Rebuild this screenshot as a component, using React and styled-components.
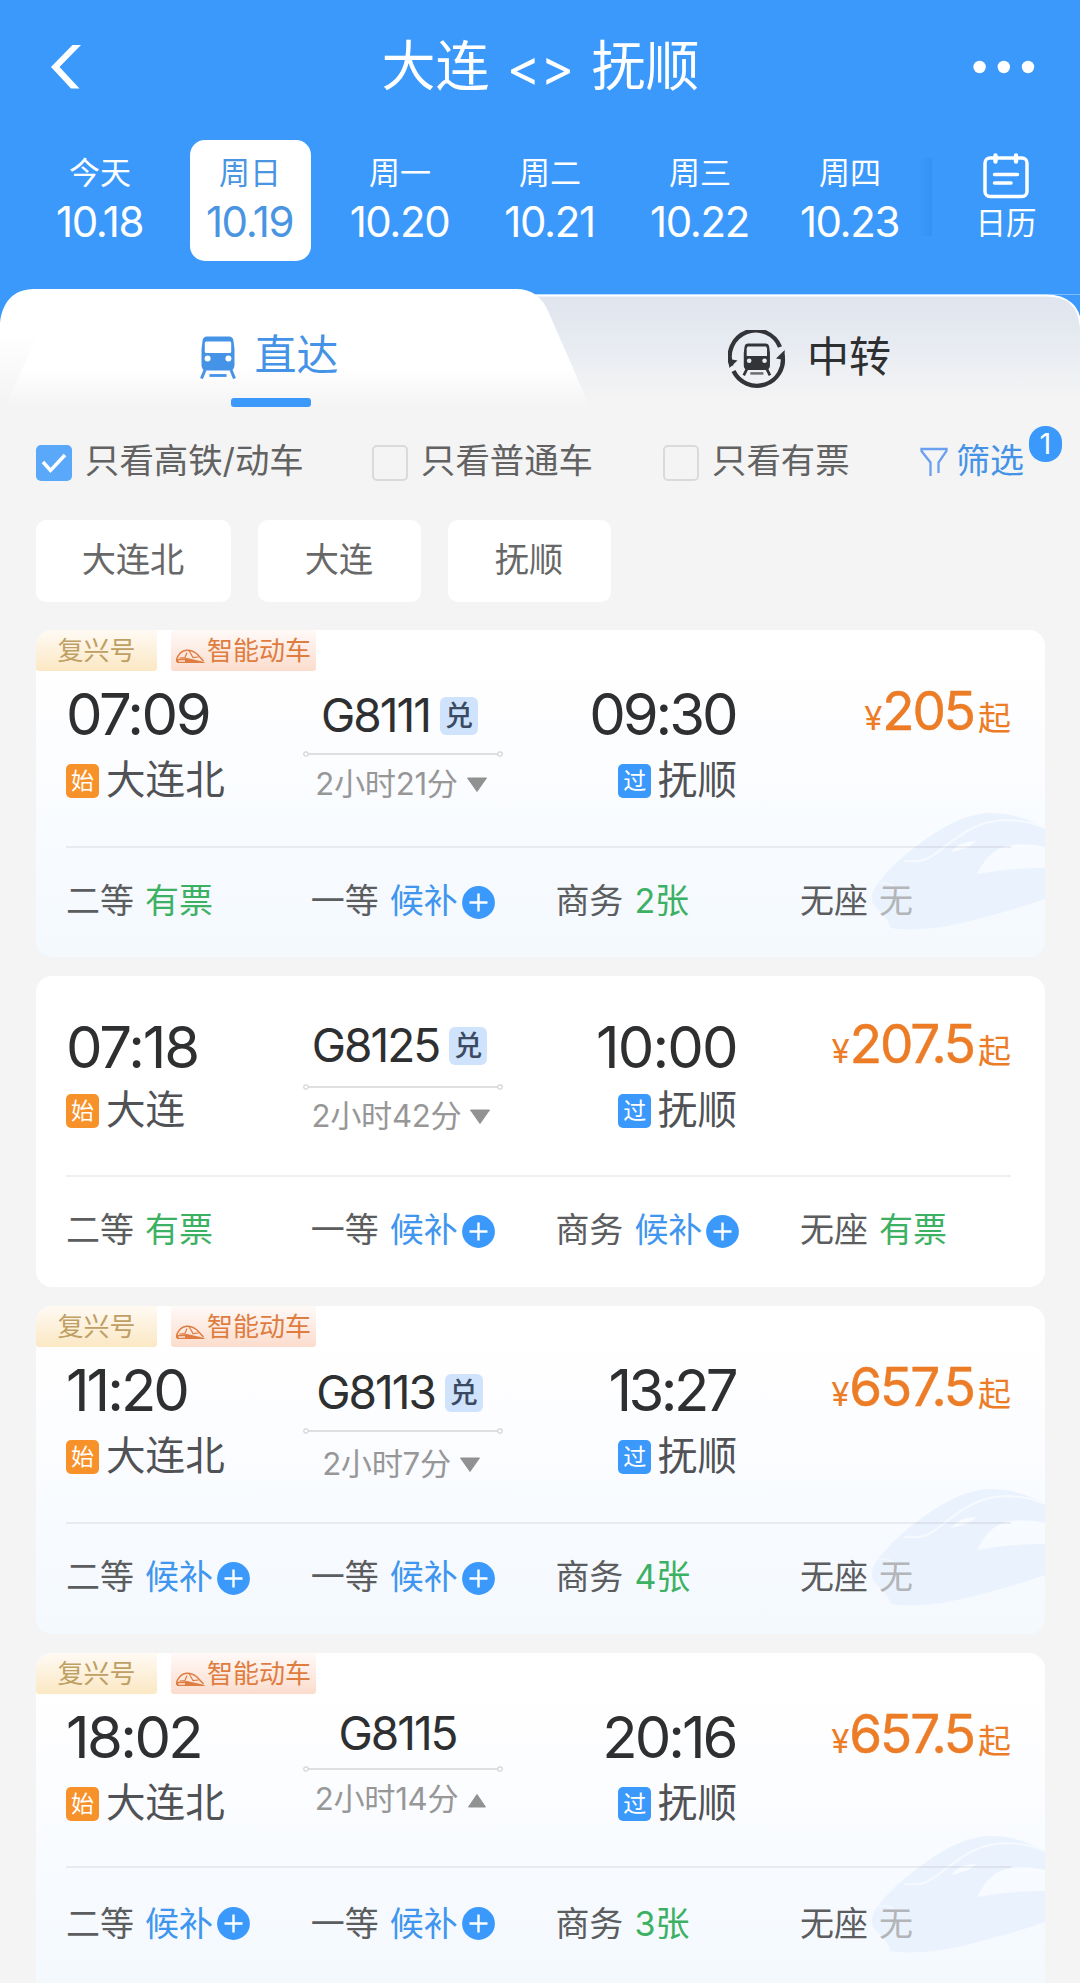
import React from "react";
import styled, { createGlobalStyle, css } from "styled-components";

const BLUE = "#3b99fc";

const GlobalStyle = createGlobalStyle`
  *, *::before, *::after { box-sizing: border-box; }
  body {
    margin: 0;
    background: #f4f4f4;
    font-family: Inter, "Noto Sans CJK SC", sans-serif;
    font-weight: 400;
    color: #333;
  }
`;

const Screen = styled.div`
  width: 1080px;
  height: 1983px;
  overflow: hidden;
  background: #f4f4f4;
`;

/* ---------- header ---------- */

const Header = styled.header`
  height: 289px;
  background: ${BLUE};
  color: #fff;
`;

const TitleBar = styled.div`
  height: 134px;
  padding: 0 45px 0 51px;
  display: grid;
  grid-template-columns: 120px 1fr 120px;
  align-items: center;
`;

const Title = styled.h1`
  margin: 0;
  padding: 1px 5px 0 0;
  font-size: 54px;
  line-height: 60px;
  font-weight: 400;
  text-align: center;
  white-space: pre;
  word-spacing: 2px;
`;

const Arrows = styled.span`
  font-size: 51px;
  letter-spacing: 0;
`;

const MoreIcon = styled.svg`
  justify-self: end;
`;

const DateBar = styled.div`
  display: flex;
  padding: 6px 0 0 25px;
`;

const DateCell = styled.div`
  width: 150px;
  height: 121px;
  display: flex;
  justify-content: center;
`;

const DateBox = styled.div`
  width: 121px;
  height: 121px;
  border-radius: 15px;
  display: flex;
  flex-direction: column;
  align-items: center;
  padding-top: 13px;
  ${(p) =>
    p.$active &&
    css`
      background: #fff;
      color: #4a95e2;
    `}
`;

const Weekday = styled.span`
  font-size: 31px;
  line-height: 40px;
`;

const DayNumber = styled.span`
  margin-top: 9px;
  padding-right: 1px;
  font-size: 42px;
  line-height: 40px;
  letter-spacing: -1.4px;
`;

const CalendarButton = styled.div`
  flex: 1;
  display: flex;
  flex-direction: column;
  align-items: center;
  padding: 13px 0 0 0;
  font-size: 30.5px;
  line-height: 36px;
  gap: 6px;
`;

const EdgeShade = styled.div`
  width: 13px;
  height: 78px;
  margin: 18px 0 0 -6px;
  background: linear-gradient(90deg, rgba(40, 120, 220, 0), rgba(40, 120, 220, 0.25));
`;

/* ---------- tabs ---------- */

const Tabs = styled.nav`
  position: relative;
  height: 118px;
  display: grid;
  grid-template-columns: 542px 538px;
`;

const TabsShape = styled.svg`
  position: absolute;
  inset: 0;
  z-index: 0;
`;

const Tab = styled.div`
  z-index: 1;
  display: flex;
  flex-direction: column;
  align-items: center;
  padding-top: ${(p) => p.$top}px;
  color: ${(p) => (p.$active ? "#4593e6" : "#2e2f31")};
  font-size: 42px;
  line-height: 60px;
`;

const TabLabel = styled.div`
  display: flex;
  align-items: center;
  gap: ${(p) => p.$gap}px;
  padding-right: 3px;

  svg {
    margin-top: ${(p) => p.$iconTop}px;
  }
`;

const TabMark = styled.i`
  width: 80px;
  height: 8.5px;
  margin-top: 13px;
  border-radius: 3px;
  background: ${BLUE};
`;

/* ---------- filters ---------- */

const FilterRow = styled.div`
  height: 113px;
  padding: 33px 18px 0 36px;
  display: flex;
  align-items: flex-start;
  font-size: 34.4px;
  line-height: 42px;
  color: #626262;
`;

const CheckLabel = styled.div`
  display: flex;
  width: ${(p) => p.$width}px;
  gap: 13px;
  white-space: nowrap;
`;

const Box = styled.span`
  width: 36px;
  height: 36px;
  margin-top: 5px;
  border-radius: 5px;
  flex: none;
  display: grid;
  place-items: center;
  border: ${(p) => (p.$on ? "0" : "2.5px solid #dadada")};
  background: ${(p) => (p.$on ? "#5aa8fa" : "transparent")};
`;

const FilterButton = styled.div`
  display: flex;
  color: #4593e6;
  margin-left: auto;
  font-size: 34px;
`;

const FunnelIcon = styled.svg`
  margin: 7px 8px 0 0;
`;

const CountBadge = styled.span`
  width: 33px;
  height: 36px;
  margin: -14px 0 0 5px;
  border-radius: 16px;
  background: ${BLUE};
  color: #fff;
  font-size: 29px;
  line-height: 35px;
  text-align: center;
`;

const StationRow = styled.div`
  display: flex;
  gap: 27px;
  padding: 0 36px;
  height: 110px;
`;

const StationChip = styled.div`
  width: ${(p) => p.$width}px;
  height: 82px;
  padding-right: 1px;
  border-radius: 10px;
  background: #fff;
  color: #686868;
  font-size: 34.2px;
  line-height: 79px;
  text-align: center;
`;

/* ---------- train cards ---------- */

const TrainList = styled.main`
  display: flex;
  flex-direction: column;
  gap: 19px;
  padding: 0 35px 0 36px;
`;

const Card = styled.article`
  position: relative;
  overflow: hidden;
  border-radius: 16px;
  flex: none;
  height: ${(p) => p.$height}px;
  background: ${(p) =>
    p.$smart ? "linear-gradient(180deg, #fff 0, #fefeff 72px, #f8fbff 203px, #f4f9fe 327px)" : "#fff"};
`;

const TrainShape = styled.svg`
  position: absolute;
  right: 0;
  top: 178px;
`;

const Tags = styled.div`
  display: flex;
  gap: 14px;
  height: 41px;
`;

const Tag = styled.span`
  width: ${(p) => p.$width}px;
  height: 41px;
  display: flex;
  justify-content: center;
  font-size: 26px;
  line-height: 41px;
  white-space: nowrap;
  color: ${(p) => (p.$smart ? "#df7c40" : "#bf9f63")};
  border-radius: 0 0 3px 3px;
  background: ${(p) =>
    p.$smart
      ? "linear-gradient(180deg, #fffaf8, #fbdccd)"
      : "linear-gradient(180deg, #fffaf4, #fbe8c4)"};
`;

const TagIcon = styled.svg`
  margin: 19px 2px 0 0;
`;

const Journey = styled.section`
  position: relative;
  display: grid;
  grid-template-columns: 237px 200px 233px 1fr;
  margin: 0 34px 0 30px;
  height: ${(p) => (p.$open ? 172 : p.$smart ? 175 : 199)}px;
  padding-top: ${(p) => (p.$smart ? 13 : 41)}px;
`;

const Stop = styled.div`
  display: flex;
  flex-direction: column;
  align-items: ${(p) => (p.$end ? "flex-end" : "flex-start")};
`;

const Time = styled.div`
  font-size: 58px;
  line-height: 60px;
  letter-spacing: ${(p) => p.$tracking}px;
  padding-right: ${(p) => -p.$tracking - 1.5}px;
  margin-right: -1px;
  color: #2e2f31;
`;

const StationName = styled.div`
  display: flex;
  align-items: flex-start;
  gap: ${(p) => (p.$end ? 6.5 : 7)}px;
  margin-top: ${(p) => (p.$smart ? 16 : 12.5)}px;
  margin-right: -1px;
  font-size: 39.6px;
  line-height: 40px;
  color: #505255;
`;

const StopBadge = styled.span`
  width: 33px;
  height: 34px;
  margin-top: 4px;
  border-radius: 5px;
  background: ${(p) => (p.$pass ? BLUE : "#f7922a")};
  color: #fff;
  font-size: 23px;
  line-height: 34px;
  text-align: center;
`;

const Middle = styled.div`
  display: flex;
  flex-direction: column;
  align-items: center;
`;

const TrainNo = styled.div`
  display: flex;
  align-items: center;
  gap: 10px;
  margin-top: ${(p) => p.$top}px;
  padding-right: ${(p) => (p.$plain ? 11 : 7)}px;
  height: 50px;
  font-size: 46px;
  line-height: 50px;
  letter-spacing: -2px;
  color: #2e2f31;
`;

const PointsBadge = styled.span`
  width: 38px;
  height: 38px;
  margin-top: 2px;
  border-radius: 6px;
  background: #cfe3fc;
  font-size: 28px;
  line-height: 38px;
  font-weight: 500;
  letter-spacing: 0;
  text-align: center;
  color: #3a4a62;
`;

const Track = styled.svg`
  flex: none;
  margin-top: ${(p) => p.$top}px;
`;

const Duration = styled.div`
  display: flex;
  align-items: center;
  gap: 8px;
  margin-top: ${(p) => p.$top}px;
  padding-right: 3px;
  font-size: 31.2px;
  line-height: 36px;
  letter-spacing: -0.3px;
  color: #979797;
`;

const Price = styled.div`
  text-align: right;
  margin-top: -3px;
  line-height: 60px;
  color: #ec7c26;
  font-size: 33px;
  white-space: nowrap;
`;

const Amount = styled.span`
  font-size: 53px;
  -webkit-text-stroke: 0.5px #ec7c26;
  letter-spacing: -2.1px;
  margin: 0 4px 0 0;
`;

const Seats = styled.section`
  position: relative;
  display: grid;
  grid-template-columns: repeat(4, 244.7px);
  margin: 0 34px 0 30px;
  padding-top: ${(p) => (p.$open ? 35 : 32)}px;
  border-top: 2px solid rgba(120, 125, 130, 0.12);
  font-size: 34px;
  line-height: 42px;
  color: #5c5d5f;
`;

const Seat = styled.div`
  display: flex;
  gap: 11px;
  white-space: nowrap;
`;

const seatColors = { yes: "#3cb163", wait: "#4096ee", none: "#b3b5b8" };

const SeatState = styled.span`
  display: flex;
  align-items: flex-start;
  color: ${(p) => seatColors[p.$kind]};
`;

const PlusIcon = styled.svg`
  margin: ${(p) => p.$top}px 0 0 4px;
`;

/* ---------- drawings ---------- */

const TrainGlyph = ({ width, height, color, hole }) => (
  <svg width={width} height={height} viewBox="0 0 36 43">
    <path d="M7 0.500H29Q33 0.500 33.500 5L34.500 13V29Q34.500 34.500 29.500 34.500H6.500Q1.500 34.500 1.500 29V13L2.500 5Q3 0.500 7 0.500Z" fill={color} />
    <path d="M6 5.500H30Q31 5.500 31.200 7V15.500Q31 17 30 17H6Q5 17 4.800 15.500V7Q5 5.500 6 5.500Z" fill={hole} />
    <circle cx="7.600" cy="22.500" r="3" fill={hole} />
    <circle cx="28.400" cy="22.500" r="3" fill={hole} />
    <path d="M5 34L1.500 42.500M31 34L34.500 42.500" stroke={color} strokeWidth="3" />
    <path d="M9.500 39.500H26.500" stroke={color} strokeWidth="2.800" />
  </svg>
);

const TransferGlyph = () => (
  <svg width="58" height="58" viewBox="0 0 58 58">
    <g fill="none" stroke="#333437" strokeWidth="4.300">
      <path d="M3.500 36A26 26 0 0 1 52 17" />
      <path d="M54.500 25A26 26 0 0 1 5.500 41" />
    </g>
    <path d="M1.300 38L1.500 29L9.500 30.500Z" fill="#333437" />
    <path d="M56.700 20L56.500 30L48 28.500Z" fill="#333437" />
    <g transform="translate(15 13) scale(0.770)">
      <path d="M7 0.500H29Q33.500 0.500 34 5L35 13V29Q35 34.500 30 35H6Q1 34.500 1 29V13L2 5Q2.500 0.500 7 0.500Z" fill="#333437" />
      <path d="M6 4.500H30L31.200 7V17H4.800V7Z" fill="#e9edf2" />
      <circle cx="8" cy="23" r="3" fill="#e9edf2" />
      <circle cx="28" cy="23" r="3" fill="#e9edf2" />
      <path d="M5 34L1 42M31 34L35 42" stroke="#333437" strokeWidth="3.500" />
      <path d="M9.500 39.500H26.500" stroke="#6a6b6e" strokeWidth="3.200" />
    </g>
  </svg>
);

const CalendarGlyph = () => (
  <svg width="46" height="46" viewBox="0 0 46 46" fill="none" stroke="#fff" strokeWidth="3.500" strokeLinecap="round">
    <rect x="2" y="5" width="42" height="38.500" rx="5" />
    <path d="M12.500 2.500V8.500M33 2.500V8.500" strokeWidth="4.400" />
    <path d="M11.500 21.500H34.500M11.500 30H28" />
  </svg>
);

const TabsBackground = () => (
  <TabsShape width="1080" height="118" viewBox="0 0 1080 118">
    <defs>
      <linearGradient id="greyTab" x1="0" y1="6" x2="0" y2="112" gradientUnits="userSpaceOnUse">
        <stop offset="0" stopColor="#dfe5ee" />
        <stop offset="0.500" stopColor="#e8ecf2" />
        <stop offset="1" stopColor="#f4f4f4" />
      </linearGradient>
      <linearGradient id="whiteTab" x1="0" y1="78" x2="0" y2="118" gradientUnits="userSpaceOnUse">
        <stop offset="0" stopColor="#ffffff" />
        <stop offset="1" stopColor="#f4f4f4" />
      </linearGradient>
      <linearGradient id="leftFade" x1="0" y1="45" x2="0" y2="112" gradientUnits="userSpaceOnUse">
        <stop offset="0" stopColor="#ffffff" />
        <stop offset="1" stopColor="#f4f4f4" />
      </linearGradient>
    </defs>
    <rect width="1080" height="60" fill={BLUE} />
    <path d="M0 5.500H1080" stroke="#7dbbfb" strokeWidth="1" />
    <path d="M0 118V6.500H1046C1068 6.500 1079 18 1080.500 36V118Z" fill="url(#greyTab)" />
    <path d="M500 6.500H1046C1068 6.500 1079 18 1080.500 36" fill="none" stroke="#fff" strokeWidth="2.200" />
    <rect width="40" height="40" fill={BLUE} />
    <path d="M0 118V34C2 14 13 0 34 0H516C532 0 542 8 548 22L590 118Z" fill="url(#whiteTab)" />
    <path d="M0 45H38L5 118H0Z" fill="url(#leftFade)" />
  </TabsShape>
);

const NoseIcon = () => (
  <TagIcon width="29" height="15" viewBox="0 0 29 15">
    <path d="M0.800 13V9.500Q4 2 10.500 1.200Q16 0.800 21 5L27.500 12" fill="none" stroke="#df7c40" strokeWidth="1.500" />
    <path d="M3.500 9L9 8.500L11 3.500M13 1.500L17 8.500L22.500 8" fill="none" stroke="#df7c40" strokeWidth="1.200" />
    <path d="M1 10L11 9L28.500 13V14H1Z" fill="#df7c40" />
    <path d="M2.500 12H9" stroke="#fce6dc" strokeWidth="1.400" />
  </TagIcon>
);

const TrainBackdrop = () => (
  <TrainShape width="180" height="126" viewBox="0 0 180 126">
    <path
      d="M180 20C160 9 143 5 125 5C98 6 75 21 57 34C40 46 26 59 18 69C8 80 5 88 8 96C12 102 22 108 26 120C50 124 80 119 105 113C132 106 154 100 180 91V60C158 60 132 62 112 66C118 54 126 43 138 39C150 35 166 36 180 39Z"
      fill="#eaf2fe"
    />
    <path d="M39 53C62 55 66 49 82 37C104 20 118 13 140 12C156 12 168 15 180 20" fill="none" stroke="#f6faff" strokeWidth="2" />
    <path d="M86 44Q94 33 111 33Q106 40 86 44Z" fill="#f8fbff" />
    <path d="M14 76Q22 73 31 80L35 84" fill="none" stroke="#f3f8ff" strokeWidth="1.500" />
  </TrainShape>
);

const TrackLine = ({ top }) => (
  <Track $top={top} width="200" height="6" viewBox="0 0 200 6">
    <path d="M5 3H195" stroke="#dedfdf" strokeWidth="2" />
    <circle cx="3" cy="3" r="2.200" fill="#fff" stroke="#d2d3d3" strokeWidth="1.200" />
    <circle cx="197" cy="3" r="2.200" fill="#fff" stroke="#d2d3d3" strokeWidth="1.200" />
  </Track>
);

const Triangle = ({ up }) => (
  <svg width="22" height="18" viewBox="0 0 22 18">
    <path
      d={up ? "M11 4.500L19.500 17H2.500Z" : "M1.500 3H20.500L11 16.500Z"}
      fill="#919191"
      stroke="#919191"
      strokeWidth="1"
      strokeLinejoin="round"
    />
  </svg>
);

const Plus = ({ top }) => (
  <PlusIcon $top={top} width="33" height="33" viewBox="0 0 33 33">
    <circle cx="16.500" cy="16.500" r="16.400" fill={BLUE} />
    <path d="M7.500 16.500H25.500M16.500 7.500V25.500" stroke="#fff" strokeWidth="2.400" />
  </PlusIcon>
);

/* ---------- data ---------- */

const days = [
  ["今天", "10.18"],
  ["周日", "10.19"],
  ["周一", "10.20"],
  ["周二", "10.21"],
  ["周三", "10.22"],
  ["周四", "10.23"],
];

const trains = [
  {
    smart: true, no: "G8111", points: true, depart: "07:09", arrive: "09:30", from: "大连北", to: "抚顺",
    duration: "2小时21分", price: "205", height: 327, layout: [6, 11, 8.5], tracking: [-2.5, -3.1],
    seats: [["二等", "有票", "yes"], ["一等", "候补", "wait"], ["商务", "2张", "yes"], ["无座", "无", "none"]],
  },
  {
    smart: false, no: "G8125", points: true, depart: "07:18", arrive: "10:00", from: "大连", to: "抚顺",
    duration: "2小时42分", price: "207.5", height: 311, layout: [3, 14, 7.5], tracking: [-2.1, -1.9],
    seats: [["二等", "有票", "yes"], ["一等", "候补", "wait"], ["商务", "候补", "wait"], ["无座", "有票", "yes"]],
  },
  {
    smart: true, no: "G8113", points: true, depart: "11:20", arrive: "13:27", from: "大连北", to: "抚顺",
    duration: "2小时7分", price: "657.5", height: 328, layout: [7, 11, 11.5], tracking: [-3, -3.6],
    seats: [["二等", "候补", "wait"], ["一等", "候补", "wait"], ["商务", "4张", "yes"], ["无座", "无", "none"]],
  },
  {
    smart: true, no: "G8115", points: false, depart: "18:02", arrive: "20:16", from: "大连北", to: "抚顺",
    duration: "2小时14分", price: "657.5", height: 340, up: true, open: true, layout: [1, 8, 8.5], tracking: [-2.6, -3],
    seats: [["二等", "候补", "wait"], ["一等", "候补", "wait"], ["商务", "3张", "yes"], ["无座", "无", "none"]],
  },
];

const TrainCard = ({ t }) => (
  <Card $smart={t.smart} $height={t.height}>
    {t.smart && <TrainBackdrop />}
    {t.smart && (
      <Tags>
        <Tag $width={121}>复兴号</Tag>
        <Tag $width={145} $smart>
          <NoseIcon />
          智能动车
        </Tag>
      </Tags>
    )}
    <Journey $smart={t.smart} $open={t.open}>
      <Stop>
        <Time $tracking={t.tracking[0]}>{t.depart}</Time>
        <StationName $smart={t.smart}>
          <StopBadge>始</StopBadge>
          {t.from}
        </StationName>
      </Stop>
      <Middle>
        <TrainNo $top={t.layout[0]} $plain={!t.points}>
          {t.no}
          {t.points && <PointsBadge>兑</PointsBadge>}
        </TrainNo>
        <TrackLine top={t.layout[1]} />
        <Duration $top={t.layout[2]}>
          {t.duration}
          <Triangle up={t.up} />
        </Duration>
      </Middle>
      <Stop $end>
        <Time $tracking={t.tracking[1]}>{t.arrive}</Time>
        <StationName $smart={t.smart} $end>
          <StopBadge $pass>过</StopBadge>
          {t.to}
        </StationName>
      </Stop>
      <Price>
        ¥<Amount>{t.price}</Amount>起
      </Price>
    </Journey>
    <Seats $open={t.open}>
      {t.seats.map(([name, value, kind]) => (
        <Seat key={name}>
          {name}
          <SeatState $kind={kind}>
            {value}
            {kind === "wait" && <Plus top={t.open ? 4 : 6} />}
          </SeatState>
        </Seat>
      ))}
    </Seats>
  </Card>
);

export default function App() {
  return (
    <Screen>
      <GlobalStyle />
      <Header>
        <TitleBar>
          <svg width="30" height="44" viewBox="0 0 30 44">
            <path d="M21.500 0H30L8.500 22L28.500 43.500H20L0 22Z" fill="#fff" />
          </svg>
          <Title>
            大连 <Arrows>&lt;&gt;</Arrows> 抚顺
          </Title>
          <MoreIcon width="62" height="14" viewBox="0 0 62 14" fill="#fff">
            <circle cx="6.600" cy="7" r="6.200" />
            <circle cx="30.800" cy="7" r="6.200" />
            <circle cx="55" cy="7" r="6.200" />
          </MoreIcon>
        </TitleBar>
        <DateBar>
          {days.map(([name, date], i) => (
            <DateCell key={date}>
              <DateBox $active={i === 1}>
                <Weekday>{name}</Weekday>
                <DayNumber>{date}</DayNumber>
              </DateBox>
            </DateCell>
          ))}
          <EdgeShade />
          <CalendarButton>
            <CalendarGlyph />
            日历
          </CalendarButton>
        </DateBar>
      </Header>

      <Tabs>
        <TabsBackground />
        <Tab $active $top={36}>
          <TabLabel $gap={18} $iconTop={5}>
            <TrainGlyph width={36} height={43} color="#4593e6" hole="#fff" />
            直达
          </TabLabel>
          <TabMark />
        </Tab>
        <Tab $top={36}>
          <TabLabel $gap={21} $iconTop={5}>
            <TransferGlyph />
            中转
          </TabLabel>
        </Tab>
      </Tabs>

      <FilterRow>
        <CheckLabel $width={336}>
          <Box $on>
            <svg width="26" height="22" viewBox="0 0 26 22">
              <path d="M2 10L9.500 18.500L24 3" fill="none" stroke="#fff" strokeWidth="3.500" />
            </svg>
          </Box>
          只看高铁/动车
        </CheckLabel>
        <CheckLabel $width={291}>
          <Box />
          只看普通车
        </CheckLabel>
        <CheckLabel $width={200}>
          <Box />
          只看有票
        </CheckLabel>
        <FilterButton>
          <FunnelIcon width="28" height="30" viewBox="0 0 28 30" fill="none" stroke="#6b9ff0" strokeWidth="2.300">
            <path d="M10.500 29V15.500L1.500 4V2H26.500V4L18.500 15.500V26" />
          </FunnelIcon>
          筛选
          <CountBadge>1</CountBadge>
        </FilterButton>
      </FilterRow>

      <StationRow>
        <StationChip $width={195}>大连北</StationChip>
        <StationChip $width={163}>大连</StationChip>
        <StationChip $width={163}>抚顺</StationChip>
      </StationRow>

      <TrainList>
        {trains.map((t) => (
          <TrainCard key={t.no} t={t} />
        ))}
      </TrainList>
    </Screen>
  );
}
